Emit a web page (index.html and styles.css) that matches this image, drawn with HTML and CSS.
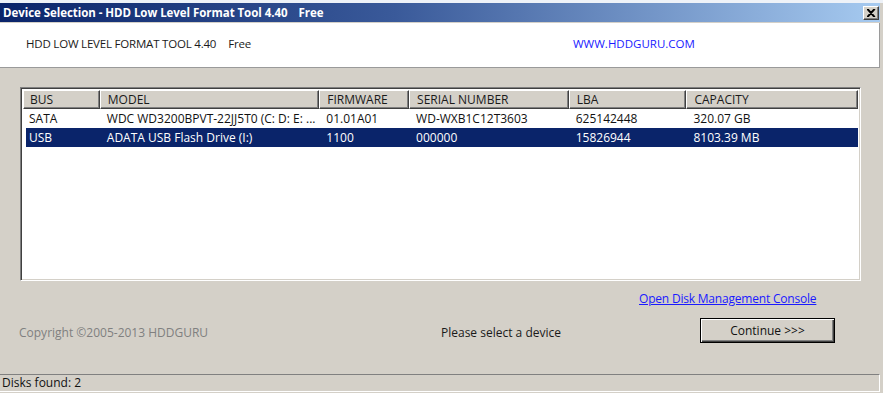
FILE: index.html
```html
<!DOCTYPE html>
<html lang="en">

<head>
    <meta charset="UTF-8">
    <meta name="viewport" content="width=device-width, initial-scale=1.0">
    <title>Device Selection - HDD Low Level Format Tool 4.40</title>
    <link rel="stylesheet" href="styles.css">
</head>

<body>
    <div class="desktopStrip"></div>
    <div class="window">
        <div class="titleBar">
            <span class="titleText">Device Selection - HDD Low Level Format Tool 4.40<span class="titleFree">Free</span></span>
            <button class="closeBtn" aria-label="Close">
                <svg width="9" height="8" viewBox="0 0 9 8">
                    <path d="M1 0 L8 8 M0 0 L7 8 M8 0 L1 8 M7 0 L0 8" stroke="#000" stroke-width="1.2" fill="none"/>
                </svg>
            </button>
        </div>

        <div class="banner">
            <span class="productName">HDD LOW LEVEL FORMAT TOOL 4.40<span class="productFree">Free</span></span>
            <a class="siteLink">WWW.HDDGURU.COM</a>
        </div>

        <div class="content">
            <div class="listView">
                <div class="listHeader">
                    <div class="col colBus">BUS</div>
                    <div class="col colModel">MODEL</div>
                    <div class="col colFw">FIRMWARE</div>
                    <div class="col colSerial">SERIAL NUMBER</div>
                    <div class="col colLba">LBA</div>
                    <div class="col colCap">CAPACITY</div>
                </div>
                <div class="listRow">
                    <div class="col colBus">SATA</div>
                    <div class="col colModel">WDC WD3200BPVT-22JJ5T0 (C: D: E: ...</div>
                    <div class="col colFw">01.01A01</div>
                    <div class="col colSerial">WD-WXB1C12T3603</div>
                    <div class="col colLba">625142448</div>
                    <div class="col colCap">320.07 GB</div>
                </div>
                <div class="listRow selected">
                    <div class="col colBus">USB</div>
                    <div class="col colModel">ADATA USB Flash Drive (I:)</div>
                    <div class="col colFw">1100</div>
                    <div class="col colSerial">000000</div>
                    <div class="col colLba">15826944</div>
                    <div class="col colCap">8103.39 MB</div>
                </div>
            </div>

            <div class="linkRow">
                <a class="diskLink">Open Disk Management Console</a>
            </div>

            <div class="footerRow">
                <span class="copyright">Copyright ©2005-2013 HDDGURU</span>
                <span class="hint">Please select a device</span>
                <button class="continueBtn">Continue &gt;&gt;&gt;</button>
            </div>
        </div>

        <div class="statusBar">Disks found: 2</div>
    </div>
</body>

</html>
```

FILE: styles.css
```css
body, html {
    margin: 0;
    background: #ffffff;
    font-family: "Open Sans", "Noto Sans", sans-serif;
    font-size: 12px;
}

.desktopStrip {
    height: 3px;
    background: #eef2f8;
}

.window {
    width: 883px;
    height: 390px;
    box-sizing: border-box;
    padding-right: 3px;
    background: #d4d0c8;
    display: flex;
    flex-direction: column;
}

/* title bar */
.titleBar {
    height: 19px;
    display: flex;
    align-items: center;
    justify-content: space-between;
    padding: 0 1px 0 3px;
    background: linear-gradient(to right, #0a246a 0%, #3a5a9a 45%, #a6caf0 100%);
    color: #ffffff;
    font-weight: bold;
    font-size: 11.5px;
}

.titleText {
    letter-spacing: -0.05px;
}

.titleFree {
    margin-left: 11px;
}

.closeBtn {
    width: 16px;
    height: 14px;
    padding: 0;
    display: flex;
    align-items: center;
    justify-content: center;
    background: #d4d0c8;
    border: 1px solid;
    border-color: #ffffff #404040 #404040 #ffffff;
    box-shadow: inset -1px -1px 0 #808080;
}

/* white banner */
.banner {
    height: 45px;
    display: flex;
    align-items: center;
    padding-bottom: 4px;
    box-sizing: border-box;
    margin-top: 1px;
    background: #ffffff;
    border-bottom: 1px solid #9a9a9a;
    border-right: 1px solid #9a9a9a;
    font-size: 11.5px;
}

.productName {
    margin-left: 26px;
    width: 547px;
    color: #1a1a1a;
    letter-spacing: -0.2px;
}

.productFree {
    margin-left: 12px;
}

.siteLink {
    color: #1a1aff;
}

/* body */
.content {
    flex: 1;
    padding: 19px 0 0 20px;
}

.listView {
    width: 841px;
    height: 194px;
    box-sizing: border-box;
    background: #ffffff;
    border: 1px solid;
    border-color: #808080 #ffffff #ffffff #808080;
    box-shadow: inset 1px 1px 0 #404040, inset -1px -1px 0 #d4d0c8;
    padding: 2px 2px;
}

.listHeader, .listRow {
    display: flex;
}

.col {
    box-sizing: border-box;
    padding-left: 7px;
    white-space: nowrap;
    overflow: hidden;
}

.colBus { width: 77px; padding-left: 6px; }
.colModel { width: 220px; }
.colFw { width: 90px; }
.colSerial { width: 160px; }
.colLba { width: 118px; }
.colCap { width: 172px; }

.listHeader .col {
    height: 19px;
    line-height: 17px;
    background: #d4d0c8;
    border: 1px solid;
    border-color: #ffffff #404040 #404040 #ffffff;
    box-shadow: inset -1px -1px 0 #808080;
    color: #1a1a1a;
}

.listRow {
    height: 19px;
    line-height: 20px;
    color: #111111;
}

.listRow.selected {
    background: #0a246a;
    color: #ffffff;
    margin-left: 3px;
}

.listRow.selected .colBus {
    width: 74px;
    padding-left: 3px;
}

.linkRow {
    height: 16px;
    margin-top: 10px;
    padding-left: 619px;
    line-height: 16px;
}

.diskLink {
    color: #1a1aff;
    text-decoration: underline;
    letter-spacing: -0.2px;
}

.footerRow {
    display: grid;
    grid-template-columns: 422px 259px 135px;
    align-items: center;
    margin-top: 11px;
    margin-left: -1px;
}

.copyright {
    color: #808080;
    padding-top: 4px;
}

.hint {
    color: #1a1a1a;
    padding-top: 3px;
}

.continueBtn {
    height: 25px;
    padding: 0;
    font-family: inherit;
    font-size: 12px;
    color: #111111;
    background: #d4d0c8;
    border: 1px solid #000000;
    box-shadow: inset 1px 1px 0 #ffffff, inset -1px -1px 0 #404040, inset -2px -2px 0 #808080;
}

/* status bar */
.statusBar {
    height: 16px;
    line-height: 15px;
    margin-bottom: 1px;
    padding-left: 2px;
    border-top: 1px solid #808080;
    border-bottom: 1px solid #ffffff;
    border-right: 1px solid #ffffff;
    color: #111111;
}
```
